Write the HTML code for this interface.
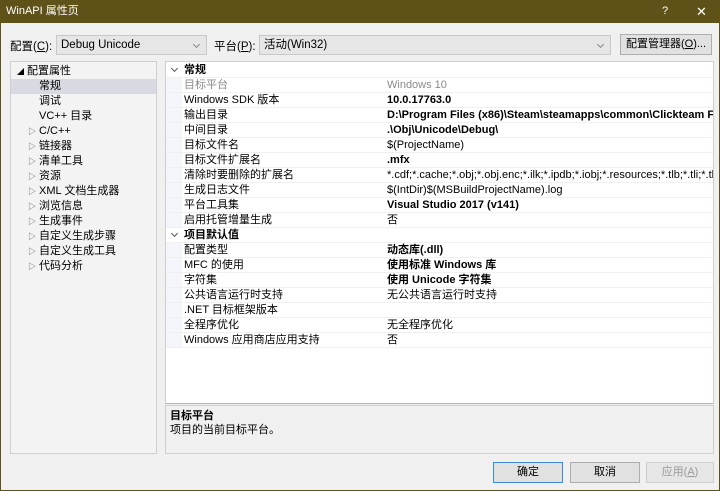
<!DOCTYPE html>
<html><head><meta charset="utf-8"><style>
*{margin:0;padding:0;box-sizing:border-box}
body{width:720px;height:491px;background:#f0f0f0;font-family:"Liberation Sans","Noto Sans CJK SC",sans-serif;font-size:11px;color:#000;position:relative;overflow:hidden;border:1px solid #5f5219;border-top:none}
.abs{position:absolute}
#title{left:-1px;top:0;width:720px;height:23px;background:#5f5219;color:#fff;font-size:11px;line-height:23px;padding-left:6px}
.combo{background:#e6e6e6;border:1px solid #c8c8c8;height:20px;line-height:19px;padding-left:4px;font-size:11.5px}
.combo span.arr{position:absolute;right:7px;top:6px;width:5px;height:5px;border-right:1px solid #888;border-bottom:1px solid #888;transform:rotate(45deg)}
.btn{background:#e1e1e1;border:1px solid #adadad;text-align:center;line-height:19px;height:21px;font-size:11px}
#tree{left:9px;top:61px;width:147px;height:393px;background:#f3f3f3;border:1px solid #cfcfcf}
.t{position:absolute;left:0;width:145px;height:15px;line-height:15px;font-size:11px}
#grid{left:164px;top:61px;width:549px;height:343px;background:#fff;border:1px solid #cfcfcf;border-bottom-color:#b5b5b5;overflow:hidden}
.r{position:absolute;left:0;width:547px;height:15px;line-height:15px;border-bottom:1px solid #f0f0f0;font-size:11px;overflow:hidden}
.r .n{position:absolute;left:18px}
.r .v{position:absolute;left:221px;white-space:nowrap}
.r.h{font-weight:bold}
.r .m{position:absolute;left:0;top:0;width:16px;height:15px;background:#f4f6fb}
.r .c{position:absolute;left:6px;top:3px;width:5px;height:5px;border-right:1px solid #555;border-bottom:1px solid #555;transform:rotate(45deg)}
b{font-weight:bold}
#desc{left:164px;top:405px;width:549px;height:49px;border:1px solid #cfcfcf;padding:3px 4px;line-height:14px}
</style></head><body>
<div id="title" class="abs">WinAPI 属性页<span class="abs" style="left:662px;font-size:11px">?</span><span class="abs" style="left:696px;font-size:13px">✕</span></div>

<div class="abs" style="left:9px;top:38px;font-size:11.5px">配置(<u>C</u>):</div>
<div class="abs combo" style="left:55px;top:35px;width:151px">Debug Unicode<span class="arr"></span></div>
<div class="abs" style="left:213px;top:38px;font-size:11.5px">平台(<u>P</u>):</div>
<div class="abs combo" style="left:258px;top:35px;width:352px">活动(Win32)<span class="arr"></span></div>
<div class="abs btn" style="left:619px;top:34px;width:92px">配置管理器(<u>O</u>)...</div>

<div id="tree" class="abs">
<div class="t" style="top:2px;padding-left:6px"><span style="font-size:7px">◢</span> 配置属性</div>
<div class="t" style="top:17px;padding-left:28px;background:#d9d9e1">常规</div>
<div class="t" style="top:32px;padding-left:28px">调试</div>
<div class="t" style="top:47px;padding-left:28px">VC++ 目录</div>
<div class="t" style="top:62px;padding-left:17px"><span style="font-size:8px;color:#555">▷</span> C/C++</div>
<div class="t" style="top:77px;padding-left:17px"><span style="font-size:8px;color:#555">▷</span> 链接器</div>
<div class="t" style="top:92px;padding-left:17px"><span style="font-size:8px;color:#555">▷</span> 清单工具</div>
<div class="t" style="top:107px;padding-left:17px"><span style="font-size:8px;color:#555">▷</span> 资源</div>
<div class="t" style="top:122px;padding-left:17px"><span style="font-size:8px;color:#555">▷</span> XML 文档生成器</div>
<div class="t" style="top:137px;padding-left:17px"><span style="font-size:8px;color:#555">▷</span> 浏览信息</div>
<div class="t" style="top:152px;padding-left:17px"><span style="font-size:8px;color:#555">▷</span> 生成事件</div>
<div class="t" style="top:167px;padding-left:17px"><span style="font-size:8px;color:#555">▷</span> 自定义生成步骤</div>
<div class="t" style="top:182px;padding-left:17px"><span style="font-size:8px;color:#555">▷</span> 自定义生成工具</div>
<div class="t" style="top:197px;padding-left:17px"><span style="font-size:8px;color:#555">▷</span> 代码分析</div>
</div>

<div id="grid" class="abs">
<div class="r h" style="top:1px"><span class="c"></span><span class="n">常规</span></div>
<div class="r" style="top:16px;color:#8a8a8a"><span class="m"></span><span class="n">目标平台</span><span class="v">Windows 10</span></div>
<div class="r" style="top:31px"><span class="m"></span><span class="n">Windows SDK 版本</span><span class="v"><b>10.0.17763.0</b></span></div>
<div class="r" style="top:46px"><span class="m"></span><span class="n">输出目录</span><span class="v"><b>D:\Program Files (x86)\Steam\steamapps\common\Clickteam F</b></span></div>
<div class="r" style="top:61px"><span class="m"></span><span class="n">中间目录</span><span class="v"><b>.\Obj\Unicode\Debug\</b></span></div>
<div class="r" style="top:76px"><span class="m"></span><span class="n">目标文件名</span><span class="v">$(ProjectName)</span></div>
<div class="r" style="top:91px"><span class="m"></span><span class="n">目标文件扩展名</span><span class="v"><b>.mfx</b></span></div>
<div class="r" style="top:106px"><span class="m"></span><span class="n">清除时要删除的扩展名</span><span class="v">*.cdf;*.cache;*.obj;*.obj.enc;*.ilk;*.ipdb;*.iobj;*.resources;*.tlb;*.tli;*.tlh;</span></div>
<div class="r" style="top:121px"><span class="m"></span><span class="n">生成日志文件</span><span class="v">$(IntDir)$(MSBuildProjectName).log</span></div>
<div class="r" style="top:136px"><span class="m"></span><span class="n">平台工具集</span><span class="v"><b>Visual Studio 2017 (v141)</b></span></div>
<div class="r" style="top:151px"><span class="m"></span><span class="n">启用托管增量生成</span><span class="v">否</span></div>
<div class="r h" style="top:166px"><span class="c"></span><span class="n">项目默认值</span></div>
<div class="r" style="top:181px"><span class="m"></span><span class="n">配置类型</span><span class="v"><b>动态库(.dll)</b></span></div>
<div class="r" style="top:196px"><span class="m"></span><span class="n">MFC 的使用</span><span class="v"><b>使用标准 Windows 库</b></span></div>
<div class="r" style="top:211px"><span class="m"></span><span class="n">字符集</span><span class="v"><b>使用 Unicode 字符集</b></span></div>
<div class="r" style="top:226px"><span class="m"></span><span class="n">公共语言运行时支持</span><span class="v">无公共语言运行时支持</span></div>
<div class="r" style="top:241px"><span class="m"></span><span class="n">.NET 目标框架版本</span><span class="v"></span></div>
<div class="r" style="top:256px"><span class="m"></span><span class="n">全程序优化</span><span class="v">无全程序优化</span></div>
<div class="r" style="top:271px"><span class="m"></span><span class="n">Windows 应用商店应用支持</span><span class="v">否</span></div>
</div>

<div id="desc" class="abs"><b>目标平台</b><br>项目的当前目标平台。</div>

<div class="abs btn" style="left:492px;top:462px;width:70px;border:1px solid #3c8ad8;background:#e1e1e1">确定</div>
<div class="abs btn" style="left:569px;top:462px;width:70px">取消</div>
<div class="abs btn" style="left:645px;top:462px;width:68px;color:#9a9a9a;background:#e6e6e6;border-color:#cfcfcf">应用(<u>A</u>)</div>
</body></html>
